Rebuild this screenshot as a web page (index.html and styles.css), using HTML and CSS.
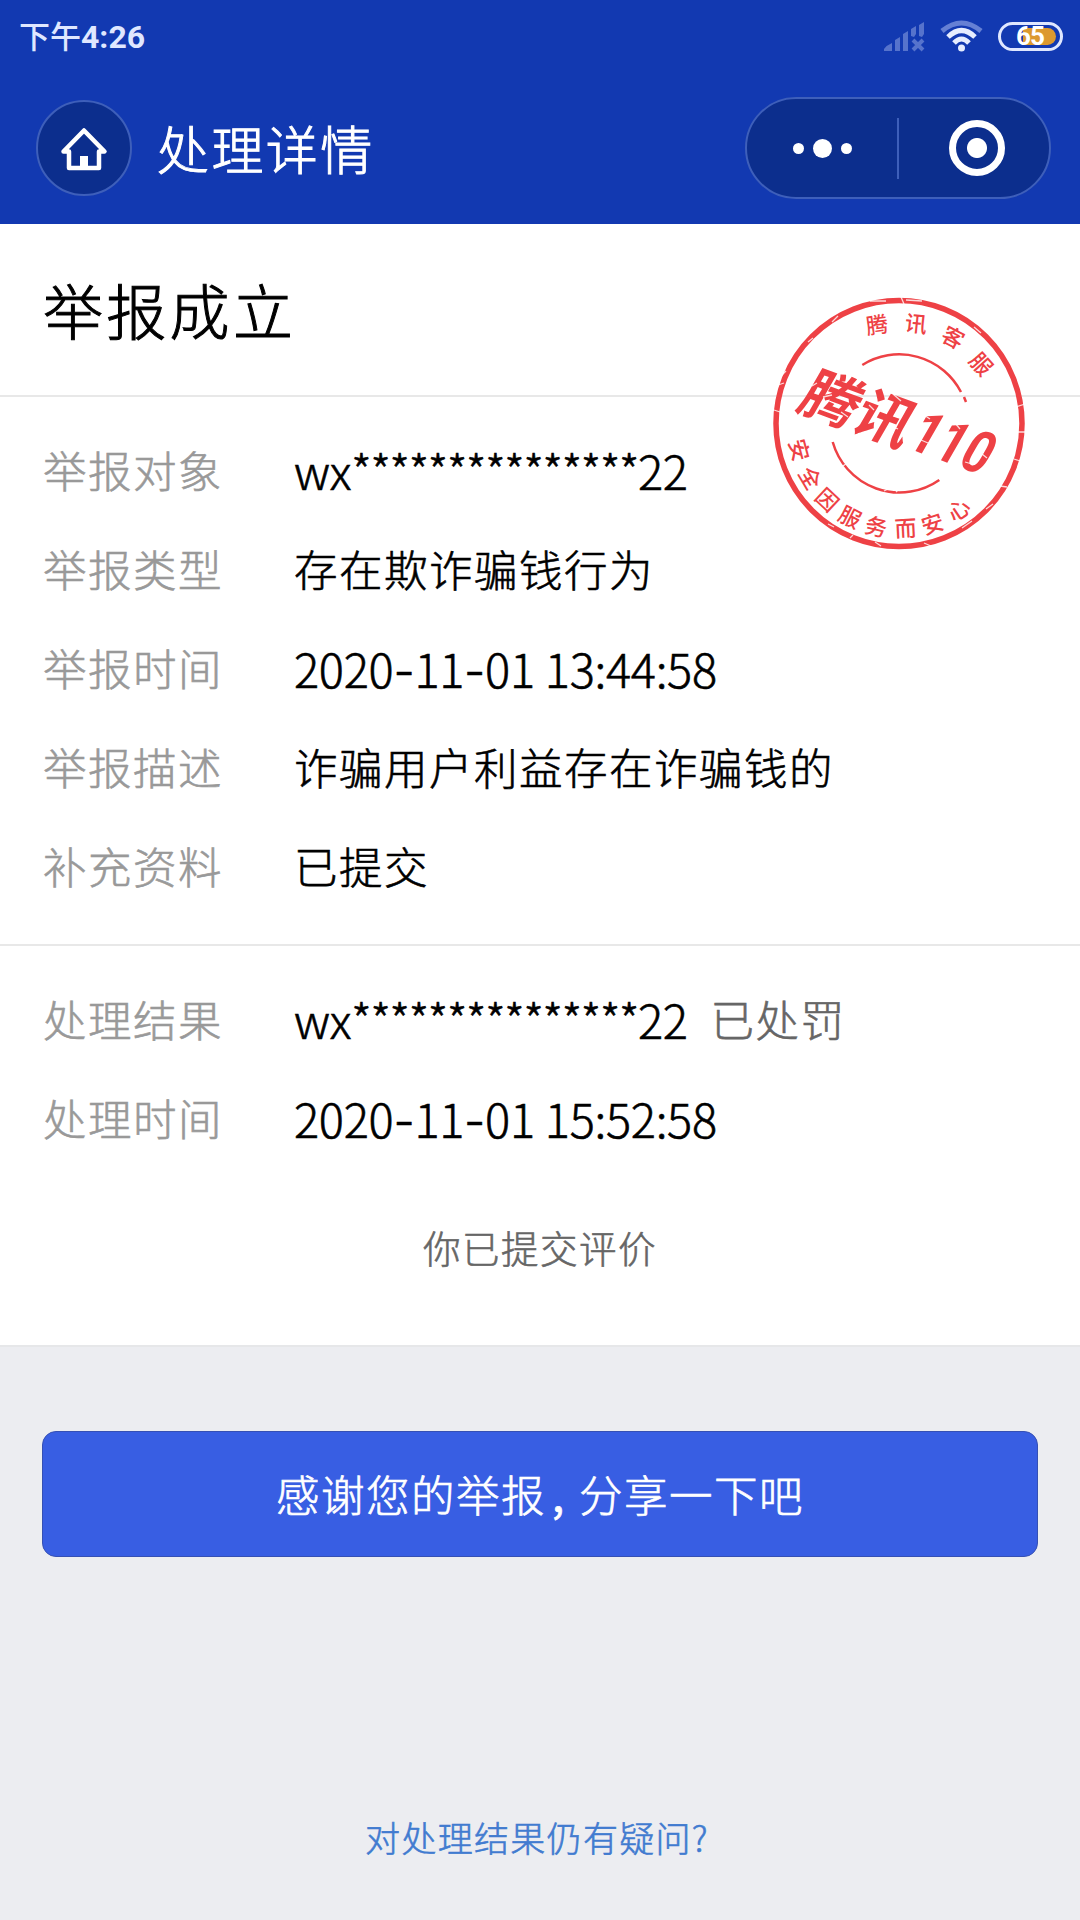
FILE: index.html
```html
<!DOCTYPE html>
<html lang="zh-CN">
<head>
    <meta charset="UTF-8">
    <title>处理详情</title>
    <link rel="stylesheet" href="styles.css">
</head>
<body>
    <div class="header">
        <div class="status-bar">
            <span class="time">下午<b>4:26</b></span>
            <div class="status-icons">
                <svg class="signal" width="42" height="31" viewBox="0 0 42 31">
                    <path d="M1 30V28Q4 24 9 22V30ZM12 30V19L17 16V30ZM20 30V13L25 10V30ZM28 15V8L33 5V13L31 16ZM36 15V4L41 1V13L39 16Z"/>
                    <path class="cross" d="M30 19L40 29M40 19L30 29"/>
                </svg>
                <svg class="wifi" width="43" height="32" viewBox="0 0 43 32">
                    <path class="faint" d="M2 11Q21.500 -5 41 11"/>
                    <path d="M8 17Q21.500 4 35 17M14 23Q21.500 15 29 23"/>
                    <circle cx="21.500" cy="28" r="3.500"/>
                </svg>
                <div class="battery">
                    <div class="battery-level"></div>
                    <span class="battery-text">65</span>
                </div>
            </div>
        </div>
        <div class="nav-bar">
            <div class="home">
                <svg width="50" height="46" viewBox="0 0 50 46">
                    <path d="M4.500 26.500L25 5.500L45.500 26.500H40V43H10V26.500Z"/>
                    <rect x="21" y="31" width="8" height="13"/>
                </svg>
            </div>
            <h1 class="nav-title">处理详情</h1>
            <div class="capsule">
                <div class="more">
                    <i class="dot"></i>
                    <i class="dot big"></i>
                    <i class="dot"></i>
                </div>
                <div class="capsule-line"></div>
                <div class="close"><i></i></div>
            </div>
        </div>
    </div>

    <div class="content">
        <h2 class="result-title">举报成立</h2>
        <div class="section report">
            <div class="row"><span class="label">举报对象</span><span class="value account">wx<span class="stars">***************</span>22</span></div>
            <div class="row"><span class="label">举报类型</span><span class="value">存在欺诈骗钱行为</span></div>
            <div class="row"><span class="label">举报时间</span><span class="value date">2020<i class="dash">-</i>11<i class="dash">-</i>01 13:44:58</span></div>
            <div class="row"><span class="label">举报描述</span><span class="value">诈骗用户利益存在诈骗钱的</span></div>
            <div class="row"><span class="label">补充资料</span><span class="value">已提交</span></div>
        </div>
        <div class="section handle">
            <div class="row"><span class="label">处理结果</span><span class="value account">wx<span class="stars">***************</span>22</span><span class="punish">已处罚</span></div>
            <div class="row"><span class="label">处理时间</span><span class="value date">2020<i class="dash">-</i>11<i class="dash">-</i>01 15:52:58</span></div>
        </div>
        <p class="rated">你已提交评价</p>

        <!-- 印章 -->
        <svg class="stamp" width="290" height="290" viewBox="0 0 290 290">
            <circle class="ring" cx="149" cy="143.500" r="123"/>
            <path class="arc" d="M112.300 85A69.500 69.500 0 0 1 211 112M214 117L216 122"/>
            <path class="arc" d="M82.700 162A69.500 69.500 0 0 0 189.300 200"/>
            <g class="small">
                <text transform="translate(127 45) rotate(-8)" y="8">腾</text>
                <text transform="translate(166 44) rotate(6)" y="8">讯</text>
                <text transform="translate(203 57.500) rotate(28)" y="8">客</text>
                <text transform="translate(231 84) rotate(48)" y="8">服</text>
                <text transform="translate(49 170) rotate(75)" y="8">安</text>
                <text transform="translate(60 198) rotate(59)" y="8">全</text>
                <text transform="translate(77 220) rotate(43)" y="8">因</text>
                <text transform="translate(100 237) rotate(27)" y="8">服</text>
                <text transform="translate(126 247) rotate(13)" y="8">务</text>
                <text transform="translate(155.500 248.500) rotate(-3)" y="8">而</text>
                <text transform="translate(182.500 244) rotate(-18)" y="8">安</text>
                <text transform="translate(209 230) rotate(-34)" y="8">心</text>
            </g>
            <g transform="translate(147 142) rotate(20) skewX(-10)">
                <text class="big-text" x="-97" y="22" textLength="114" lengthAdjust="spacingAndGlyphs">腾讯</text>
                <text class="big-num" x="19" y="21" textLength="82" lengthAdjust="spacingAndGlyphs">110</text>
            </g>
            <path class="wear" d="M82 42L88 36M58 62L63 58M30 97L36 91M28 105L34 103M151 17L154 24M156 20L172 21M224 47L231 53M266 127L275 124M268 152L275 152M264 179L270 181M250 206L257 207M212 248L222 241M236 229L243 224M174 263L181 266M125 262L131 266M100 258L103 255M78 244L84 247M24 130L30 132M120 21L136 21M62 106L67 103M73 117L82 115M91 132L98 137M119 125L124 130M143 114L151 121M141 146L148 149M174 135L180 139M171 160L178 163M205 143L210 149M232 174L237 178M215 182L222 184M134 211L138 209M146 212L149 209M93 186L97 183"/>
        </svg>
    </div>

    <div class="footer">
        <button class="share-button">感谢您的举报<span class="comma">,</span>分享一下吧</button>
        <a class="question">对处理结果仍有疑问?</a>
    </div>
</body>
</html>
```

FILE: styles.css
```css
* {
    box-sizing: border-box;
}
body {
    margin: 0;
    background-color: #ecedf1;
    font-family: "Noto Sans CJK SC", sans-serif;
    font-weight: 300;
    color: #000;
    -webkit-text-stroke-width: 0.6px;
}
h1, h2, p {
    margin: 0;
    font-weight: 300;
}

/* 顶部 */
.header {
    height: 224px;
    background-color: #1239b1;
    color: #fff;
}
.status-bar {
    display: flex;
    justify-content: space-between;
    align-items: center;
    height: 72px;
    padding: 0 17px 0 19px;
    -webkit-text-stroke-width: 0;
}
.time {
    font-size: 31px;
    font-weight: 500;
    line-height: 72px;
    color: #dfe7ff;
}
.time b {
    font-family: Roboto, sans-serif;
    font-size: 32px;
    font-weight: 700;
}
.status-icons {
    display: flex;
    align-items: center;
    gap: 15px;
}
.signal {
    fill: #5673cc;
}
.cross {
    stroke: #5673cc;
    stroke-width: 4;
}
.wifi {
    fill: #e6edff;
}
.wifi path {
    fill: none;
    stroke: #e6edff;
    stroke-width: 5;
}
.wifi .faint {
    stroke: #6580d4;
}
.battery {
    position: relative;
    width: 65px;
    height: 29px;
    border: 3px solid #dfe7ff;
    border-radius: 15px;
}
.battery-level {
    height: 17px;
    margin: 3px 4px 0 22px;
    background-color: #dc992f;
    border-radius: 0 9px 9px 0;
}
.battery-text {
    position: absolute;
    left: 15px;
    top: -3px;
    font-family: Roboto, sans-serif;
    font-size: 26px;
    font-weight: 700;
    line-height: 29px;
    letter-spacing: -1px;
}
.nav-bar {
    display: flex;
    align-items: center;
    height: 152px;
    padding: 0 29px 0 36px;
}
.home {
    display: flex;
    align-items: center;
    justify-content: center;
    width: 96px;
    height: 96px;
    border: 2px solid #3e5fba;
    border-radius: 50%;
    background-color: #0c2e8d;
}
.home svg {
    fill: #fff;
}
.home path {
    fill: none;
    stroke: #fff;
    stroke-width: 4.5;
    stroke-linejoin: round;
}
.nav-title {
    flex: 1;
    margin-left: 25px;
    font-size: 52px;
    letter-spacing: 2.4px;
    line-height: 76px;
    -webkit-text-stroke-width: 1px;
}
.capsule {
    display: flex;
    align-items: center;
    width: 306px;
    height: 102px;
    border: 2px solid #3e5fba;
    border-radius: 51px;
    background-color: #0c2e8d;
}
.more, .close {
    display: flex;
    align-items: center;
    justify-content: center;
}
.more {
    width: 150px;
    gap: 9px;
}
.close {
    flex: 1;
}
.dot {
    width: 11px;
    height: 11px;
    border-radius: 50%;
    background-color: #fff;
}
.dot.big {
    width: 19px;
    height: 19px;
}
.capsule-line {
    width: 2px;
    height: 61px;
    background-color: #3e5fba;
}
.close i {
    display: block;
    width: 56px;
    height: 56px;
    margin-left: 6px;
    border: 7px solid #fff;
    border-radius: 50%;
    background: radial-gradient(circle, #fff 9.5px, transparent 10.5px);
}

/* 内容 */
.content {
    position: relative;
    height: 1121px;
    background-color: #fff;
}
.result-title {
    height: 173px;
    padding: 41px 0 0 43px;
    border-bottom: 2px solid #e8e8e8;
    font-size: 60px;
    letter-spacing: 3.3px;
    line-height: 88px;
    -webkit-text-stroke-width: 1px;
}
.section {
    padding: 23px 43px 0;
}
.report {
    height: 549px;
    border-bottom: 2px solid #e8e8e8;
}
.handle {
    height: 221px;
}
.row {
    display: flex;
    height: 99px;
    font-size: 43.5px;
    letter-spacing: 1.5px;
    line-height: 99px;
    white-space: nowrap;
}
.label {
    width: 251px;
    color: #999;
}
.account, .date {
    font-size: 47px;
    letter-spacing: -0.3px;
}
.stars {
    letter-spacing: -1.7px;
}
.dash {
    font-family: Inter, sans-serif;
    font-style: normal;
}
.punish {
    margin-left: 23px;
    color: #666;
}
.rated {
    padding-top: 53px;
    text-align: center;
    font-size: 37.5px;
    letter-spacing: 1.5px;
    line-height: 54px;
    color: #666;
}

/* 印章 */
.stamp {
    position: absolute;
    left: 750px;
    top: 56px;
    fill: #ee4145;
    -webkit-text-stroke-width: 0;
}
.ring {
    fill: none;
    stroke: #ee4145;
    stroke-width: 5.5;
}
.arc {
    fill: none;
    stroke: #ee4145;
    stroke-width: 2.5;
}
.small {
    font-size: 22px;
    font-weight: 500;
    text-anchor: middle;
}
.big-text {
    font-size: 58px;
    font-weight: 700;
}
.big-num {
    font-family: Roboto, sans-serif;
    font-size: 60px;
    font-weight: 700;
}
.wear {
    fill: none;
    stroke: #fff;
    stroke-width: 1.3;
    stroke-opacity: 0.8;
}

/* 底部 */
.footer {
    display: flex;
    flex-direction: column;
    align-items: center;
    height: 575px;
    padding-top: 84px;
    border-top: 2px solid #e6e7e9;
}
.share-button {
    width: 996px;
    height: 126px;
    margin: 0;
    padding: 0 0 1px;
    border: 1px solid #3550b4;
    border-radius: 14px;
    background-color: #385ee3;
    color: #fff;
    font-family: inherit;
    font-size: 43.5px;
    font-weight: 300;
    letter-spacing: 1.5px;
    -webkit-text-stroke-width: 0.7px;
}
.comma {
    display: inline-block;
    width: 33px;
    padding-left: 6px;
    text-align: left;
    font-weight: 400;
}
.question {
    margin: 255px 6px 0 0;
    font-size: 35px;
    letter-spacing: 1.3px;
    line-height: 50px;
    color: #417bd0;
}
```
